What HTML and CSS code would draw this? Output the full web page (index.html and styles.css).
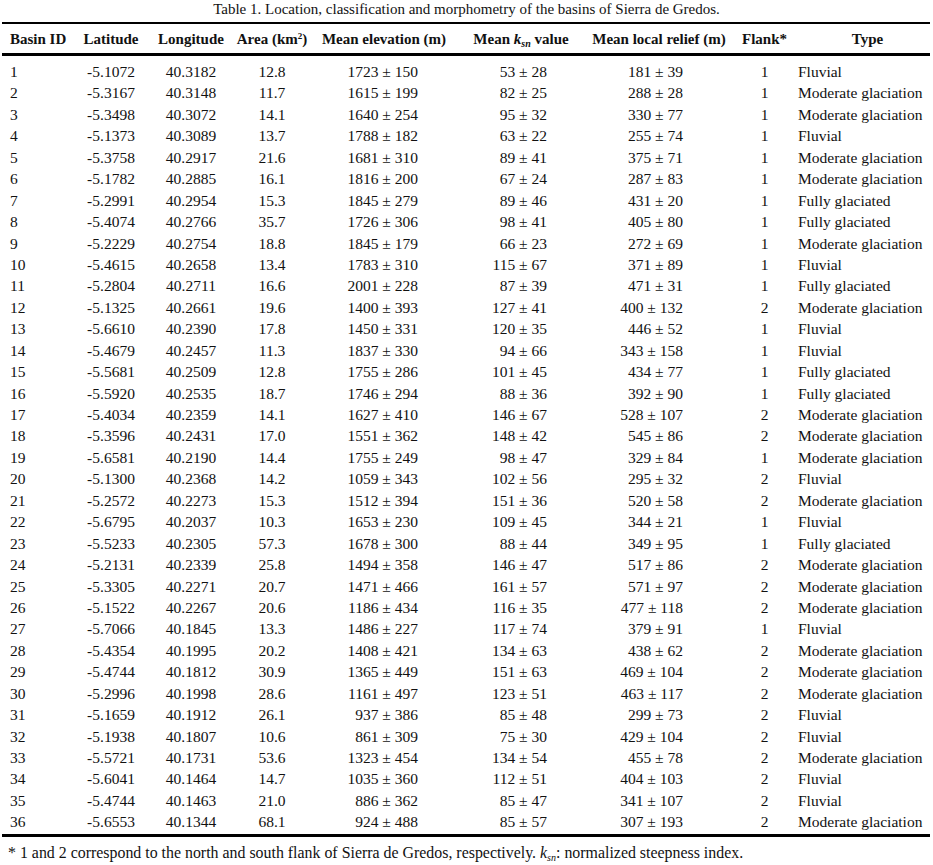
FILE: index.html
```html
<!DOCTYPE html>
<html lang="en">
<head>
<meta charset="utf-8">
<title>Table 1</title>
<link rel="stylesheet" href="styles.css">
</head>
<body>
<div class="page">
  <div class="caption">Table 1. Location, classification and morphometry of the basins of Sierra de Gredos.</div>
  <table class="data">
    <colgroup>
      <col class="c1"><col class="c2"><col class="c3"><col class="c4"><col class="c5"><col class="c6"><col class="c7"><col class="c8"><col class="c9">
    </colgroup>
    <thead>
      <tr class="head">
        <th class="id">Basin ID</th>
        <th class="ctr">Latitude</th>
        <th class="ctr">Longitude</th>
        <th class="ctr">Area (km<sup class="sup">2</sup>)</th>
        <th class="ctr">Mean elevation (m)</th>
        <th class="ctr">Mean <i>k</i><sub class="sub">sn</sub> value</th>
        <th class="ctr">Mean local relief (m)</th>
        <th class="ctr">Flank*</th>
        <th class="ctr type-h">Type</th>
      </tr>
    </thead>
    <tbody>
      <tr class="first"><td class="id">1</td><td class="ctr">-5.1072</td><td class="ctr">40.3182</td><td class="ctr">12.8</td><td class="elev">1723 ± 150</td><td class="ksn">53 ± 28</td><td class="rel">181 ± 39</td><td class="ctr">1</td><td class="type">Fluvial</td></tr>
      <tr><td class="id">2</td><td class="ctr">-5.3167</td><td class="ctr">40.3148</td><td class="ctr">11.7</td><td class="elev">1615 ± 199</td><td class="ksn">82 ± 25</td><td class="rel">288 ± 28</td><td class="ctr">1</td><td class="type">Moderate glaciation</td></tr>
      <tr><td class="id">3</td><td class="ctr">-5.3498</td><td class="ctr">40.3072</td><td class="ctr">14.1</td><td class="elev">1640 ± 254</td><td class="ksn">95 ± 32</td><td class="rel">330 ± 77</td><td class="ctr">1</td><td class="type">Moderate glaciation</td></tr>
      <tr><td class="id">4</td><td class="ctr">-5.1373</td><td class="ctr">40.3089</td><td class="ctr">13.7</td><td class="elev">1788 ± 182</td><td class="ksn">63 ± 22</td><td class="rel">255 ± 74</td><td class="ctr">1</td><td class="type">Fluvial</td></tr>
      <tr><td class="id">5</td><td class="ctr">-5.3758</td><td class="ctr">40.2917</td><td class="ctr">21.6</td><td class="elev">1681 ± 310</td><td class="ksn">89 ± 41</td><td class="rel">375 ± 71</td><td class="ctr">1</td><td class="type">Moderate glaciation</td></tr>
      <tr><td class="id">6</td><td class="ctr">-5.1782</td><td class="ctr">40.2885</td><td class="ctr">16.1</td><td class="elev">1816 ± 200</td><td class="ksn">67 ± 24</td><td class="rel">287 ± 83</td><td class="ctr">1</td><td class="type">Moderate glaciation</td></tr>
      <tr><td class="id">7</td><td class="ctr">-5.2991</td><td class="ctr">40.2954</td><td class="ctr">15.3</td><td class="elev">1845 ± 279</td><td class="ksn">89 ± 46</td><td class="rel">431 ± 20</td><td class="ctr">1</td><td class="type">Fully glaciated</td></tr>
      <tr><td class="id">8</td><td class="ctr">-5.4074</td><td class="ctr">40.2766</td><td class="ctr">35.7</td><td class="elev">1726 ± 306</td><td class="ksn">98 ± 41</td><td class="rel">405 ± 80</td><td class="ctr">1</td><td class="type">Fully glaciated</td></tr>
      <tr><td class="id">9</td><td class="ctr">-5.2229</td><td class="ctr">40.2754</td><td class="ctr">18.8</td><td class="elev">1845 ± 179</td><td class="ksn">66 ± 23</td><td class="rel">272 ± 69</td><td class="ctr">1</td><td class="type">Moderate glaciation</td></tr>
      <tr><td class="id">10</td><td class="ctr">-5.4615</td><td class="ctr">40.2658</td><td class="ctr">13.4</td><td class="elev">1783 ± 310</td><td class="ksn">115 ± 67</td><td class="rel">371 ± 89</td><td class="ctr">1</td><td class="type">Fluvial</td></tr>
      <tr><td class="id">11</td><td class="ctr">-5.2804</td><td class="ctr">40.2711</td><td class="ctr">16.6</td><td class="elev">2001 ± 228</td><td class="ksn">87 ± 39</td><td class="rel">471 ± 31</td><td class="ctr">1</td><td class="type">Fully glaciated</td></tr>
      <tr><td class="id">12</td><td class="ctr">-5.1325</td><td class="ctr">40.2661</td><td class="ctr">19.6</td><td class="elev">1400 ± 393</td><td class="ksn">127 ± 41</td><td class="rel">400 ± 132</td><td class="ctr">2</td><td class="type">Moderate glaciation</td></tr>
      <tr><td class="id">13</td><td class="ctr">-5.6610</td><td class="ctr">40.2390</td><td class="ctr">17.8</td><td class="elev">1450 ± 331</td><td class="ksn">120 ± 35</td><td class="rel">446 ± 52</td><td class="ctr">1</td><td class="type">Fluvial</td></tr>
      <tr><td class="id">14</td><td class="ctr">-5.4679</td><td class="ctr">40.2457</td><td class="ctr">11.3</td><td class="elev">1837 ± 330</td><td class="ksn">94 ± 66</td><td class="rel">343 ± 158</td><td class="ctr">1</td><td class="type">Fluvial</td></tr>
      <tr><td class="id">15</td><td class="ctr">-5.5681</td><td class="ctr">40.2509</td><td class="ctr">12.8</td><td class="elev">1755 ± 286</td><td class="ksn">101 ± 45</td><td class="rel">434 ± 77</td><td class="ctr">1</td><td class="type">Fully glaciated</td></tr>
      <tr><td class="id">16</td><td class="ctr">-5.5920</td><td class="ctr">40.2535</td><td class="ctr">18.7</td><td class="elev">1746 ± 294</td><td class="ksn">88 ± 36</td><td class="rel">392 ± 90</td><td class="ctr">1</td><td class="type">Fully glaciated</td></tr>
      <tr><td class="id">17</td><td class="ctr">-5.4034</td><td class="ctr">40.2359</td><td class="ctr">14.1</td><td class="elev">1627 ± 410</td><td class="ksn">146 ± 67</td><td class="rel">528 ± 107</td><td class="ctr">2</td><td class="type">Moderate glaciation</td></tr>
      <tr><td class="id">18</td><td class="ctr">-5.3596</td><td class="ctr">40.2431</td><td class="ctr">17.0</td><td class="elev">1551 ± 362</td><td class="ksn">148 ± 42</td><td class="rel">545 ± 86</td><td class="ctr">2</td><td class="type">Moderate glaciation</td></tr>
      <tr><td class="id">19</td><td class="ctr">-5.6581</td><td class="ctr">40.2190</td><td class="ctr">14.4</td><td class="elev">1755 ± 249</td><td class="ksn">98 ± 47</td><td class="rel">329 ± 84</td><td class="ctr">1</td><td class="type">Moderate glaciation</td></tr>
      <tr><td class="id">20</td><td class="ctr">-5.1300</td><td class="ctr">40.2368</td><td class="ctr">14.2</td><td class="elev">1059 ± 343</td><td class="ksn">102 ± 56</td><td class="rel">295 ± 32</td><td class="ctr">2</td><td class="type">Fluvial</td></tr>
      <tr><td class="id">21</td><td class="ctr">-5.2572</td><td class="ctr">40.2273</td><td class="ctr">15.3</td><td class="elev">1512 ± 394</td><td class="ksn">151 ± 36</td><td class="rel">520 ± 58</td><td class="ctr">2</td><td class="type">Moderate glaciation</td></tr>
      <tr><td class="id">22</td><td class="ctr">-5.6795</td><td class="ctr">40.2037</td><td class="ctr">10.3</td><td class="elev">1653 ± 230</td><td class="ksn">109 ± 45</td><td class="rel">344 ± 21</td><td class="ctr">1</td><td class="type">Fluvial</td></tr>
      <tr><td class="id">23</td><td class="ctr">-5.5233</td><td class="ctr">40.2305</td><td class="ctr">57.3</td><td class="elev">1678 ± 300</td><td class="ksn">88 ± 44</td><td class="rel">349 ± 95</td><td class="ctr">1</td><td class="type">Fully glaciated</td></tr>
      <tr><td class="id">24</td><td class="ctr">-5.2131</td><td class="ctr">40.2339</td><td class="ctr">25.8</td><td class="elev">1494 ± 358</td><td class="ksn">146 ± 47</td><td class="rel">517 ± 86</td><td class="ctr">2</td><td class="type">Moderate glaciation</td></tr>
      <tr><td class="id">25</td><td class="ctr">-5.3305</td><td class="ctr">40.2271</td><td class="ctr">20.7</td><td class="elev">1471 ± 466</td><td class="ksn">161 ± 57</td><td class="rel">571 ± 97</td><td class="ctr">2</td><td class="type">Moderate glaciation</td></tr>
      <tr><td class="id">26</td><td class="ctr">-5.1522</td><td class="ctr">40.2267</td><td class="ctr">20.6</td><td class="elev">1186 ± 434</td><td class="ksn">116 ± 35</td><td class="rel">477 ± 118</td><td class="ctr">2</td><td class="type">Moderate glaciation</td></tr>
      <tr><td class="id">27</td><td class="ctr">-5.7066</td><td class="ctr">40.1845</td><td class="ctr">13.3</td><td class="elev">1486 ± 227</td><td class="ksn">117 ± 74</td><td class="rel">379 ± 91</td><td class="ctr">1</td><td class="type">Fluvial</td></tr>
      <tr><td class="id">28</td><td class="ctr">-5.4354</td><td class="ctr">40.1995</td><td class="ctr">20.2</td><td class="elev">1408 ± 421</td><td class="ksn">134 ± 63</td><td class="rel">438 ± 62</td><td class="ctr">2</td><td class="type">Moderate glaciation</td></tr>
      <tr><td class="id">29</td><td class="ctr">-5.4744</td><td class="ctr">40.1812</td><td class="ctr">30.9</td><td class="elev">1365 ± 449</td><td class="ksn">151 ± 63</td><td class="rel">469 ± 104</td><td class="ctr">2</td><td class="type">Moderate glaciation</td></tr>
      <tr><td class="id">30</td><td class="ctr">-5.2996</td><td class="ctr">40.1998</td><td class="ctr">28.6</td><td class="elev">1161 ± 497</td><td class="ksn">123 ± 51</td><td class="rel">463 ± 117</td><td class="ctr">2</td><td class="type">Moderate glaciation</td></tr>
      <tr><td class="id">31</td><td class="ctr">-5.1659</td><td class="ctr">40.1912</td><td class="ctr">26.1</td><td class="elev">937 ± 386</td><td class="ksn">85 ± 48</td><td class="rel">299 ± 73</td><td class="ctr">2</td><td class="type">Fluvial</td></tr>
      <tr><td class="id">32</td><td class="ctr">-5.1938</td><td class="ctr">40.1807</td><td class="ctr">10.6</td><td class="elev">861 ± 309</td><td class="ksn">75 ± 30</td><td class="rel">429 ± 104</td><td class="ctr">2</td><td class="type">Fluvial</td></tr>
      <tr><td class="id">33</td><td class="ctr">-5.5721</td><td class="ctr">40.1731</td><td class="ctr">53.6</td><td class="elev">1323 ± 454</td><td class="ksn">134 ± 54</td><td class="rel">455 ± 78</td><td class="ctr">2</td><td class="type">Moderate glaciation</td></tr>
      <tr><td class="id">34</td><td class="ctr">-5.6041</td><td class="ctr">40.1464</td><td class="ctr">14.7</td><td class="elev">1035 ± 360</td><td class="ksn">112 ± 51</td><td class="rel">404 ± 103</td><td class="ctr">2</td><td class="type">Fluvial</td></tr>
      <tr><td class="id">35</td><td class="ctr">-5.4744</td><td class="ctr">40.1463</td><td class="ctr">21.0</td><td class="elev">886 ± 362</td><td class="ksn">85 ± 47</td><td class="rel">341 ± 107</td><td class="ctr">2</td><td class="type">Fluvial</td></tr>
      <tr class="last"><td class="id">36</td><td class="ctr">-5.6553</td><td class="ctr">40.1344</td><td class="ctr">68.1</td><td class="elev">924 ± 488</td><td class="ksn">85 ± 57</td><td class="rel">307 ± 193</td><td class="ctr">2</td><td class="type">Moderate glaciation</td></tr>
    </tbody>
  </table>
  <div class="note">* 1 and 2 correspond to the north and south flank of Sierra de Gredos, respectively. <i>k</i><sub class="sub sub-it">sn</sub>: normalized steepness index.</div>
</div>
</body>
</html>
```

FILE: styles.css
```css
html, body {
  margin: 0;
  padding: 0;
  background: #ffffff;
}

.page {
  width: 933px;
  height: 865px;
  overflow: hidden;
  font-family: "Liberation Serif", "Times New Roman", serif;
  font-size: 15px;
  color: #111111;
}

.caption {
  text-align: center;
  line-height: 18px;
  height: 18px;
  margin-bottom: 4px;
}

.data {
  margin-left: 2px;
  width: 928px;
  table-layout: fixed;
  border-collapse: collapse;
  border-top: 2px solid #000;
  border-bottom: 3px solid #000;
}

.c1 { width: 74px; }
.c2 { width: 70px; }
.c3 { width: 90px; }
.c4 { width: 72px; }
.c5 { width: 152px; }
.c6 { width: 122px; }
.c7 { width: 154px; }
.c8 { width: 57px; }
.c9 { width: 137px; }

.head th {
  font-weight: bold;
  height: 29px;
  padding: 0;
  white-space: nowrap;
  border-bottom: 3px solid #000;
  line-height: 18px;
  vertical-align: middle;
}

.data td {
  padding: 0;
  height: 21.43px;
  line-height: 21.43px;
  font-size: 15.5px;
  white-space: nowrap;
  vertical-align: middle;
}

.data .first td {
  padding-top: 5px;
}

.data .last td {
  padding-bottom: 1px;
}

.data .id {
  text-align: left;
  padding-left: 8px;
}

.data .ctr {
  text-align: center;
}

.data .type-h {
  padding-left: 12px;
}

.data .elev {
  text-align: right;
  padding-right: 42px;
}

.data .ksn {
  text-align: right;
  padding-right: 35px;
}

.data .rel {
  text-align: right;
  padding-right: 53px;
}

.data .type {
  text-align: left;
  padding-left: 5px;
}

.sup {
  font-size: 9px;
  line-height: 0;
  vertical-align: 5px;
}

.sub {
  font-size: 10px;
  line-height: 0;
  font-style: italic;
  vertical-align: -3px;
}

.note {
  margin-top: 7px;
  padding-left: 8px;
  font-size: 15.9px;
  line-height: 18px;
}
```
